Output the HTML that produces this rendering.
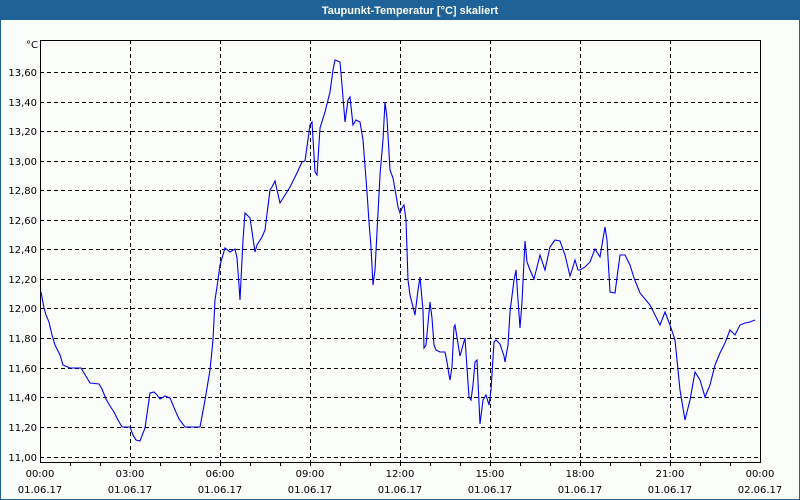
<!DOCTYPE html>
<html><head><meta charset="utf-8"><style>
html,body{margin:0;padding:0;}
body{width:800px;height:500px;overflow:hidden;background:#fbfdfb;font-family:"DejaVu Sans","Liberation Sans",sans-serif;}
</style></head><body>
<svg width="800" height="500" xmlns="http://www.w3.org/2000/svg" style="display:block">
<rect x="0" y="0" width="800" height="500" fill="#fbfdfb"/>
<rect x="0.5" y="0.5" width="799" height="499" fill="none" stroke="#1e6297" stroke-width="1"/>
<rect x="0" y="0" width="800" height="20" fill="#1e6297"/>
<text x="410" y="14" fill="#fff" font-size="11" font-weight="bold" text-anchor="middle" font-family="Liberation Sans, sans-serif">Taupunkt-Temperatur [°C] skaliert</text>
<g stroke="#000" stroke-width="1" stroke-dasharray="4,3" fill="none">
<path d="M40 72.5H760M40 102.5H760M40 131.5H760M40 161.5H760M40 190.5H760M40 220.5H760M40 249.5H760M40 279.5H760M40 308.5H760M40 338.5H760M40 368.5H760M40 397.5H760M40 427.5H760M40 457.5H760"/>
<path d="M130.5 40V462M220.5 40V462M310.5 40V462M400.5 40V462M490.5 40V462M580.5 40V462M670.5 40V462"/>
</g>
<path d="M40.5 40.5H760.5V462.5H40.5Z" fill="none" stroke="#000" stroke-width="1"/>
<path stroke="#000" stroke-width="1" d="M70.5 462v4M100.5 462v4M130.5 462v4M160.5 462v4M190.5 462v4M220.5 462v4M250.5 462v4M280.5 462v4M310.5 462v4M340.5 462v4M370.5 462v4M400.5 462v4M430.5 462v4M460.5 462v4M490.5 462v4M520.5 462v4M550.5 462v4M580.5 462v4M610.5 462v4M640.5 462v4M670.5 462v4M700.5 462v4M730.5 462v4"/>
<g font-size="10" fill="#000" text-anchor="end">
<text x="38" y="48">°C</text>
<text x="37" y="76">13,60</text><text x="37" y="106">13,40</text><text x="37" y="135">13,20</text><text x="37" y="165">13,00</text><text x="37" y="194">12,80</text><text x="37" y="224">12,60</text><text x="37" y="253">12,40</text><text x="37" y="283">12,20</text><text x="37" y="312">12,00</text><text x="37" y="342">11,80</text><text x="37" y="372">11,60</text><text x="37" y="401">11,40</text><text x="37" y="431">11,20</text><text x="37" y="461">11,00</text>
</g>
<g font-size="10" fill="#000" text-anchor="middle">
<text x="40" y="477">00:00</text><text x="130" y="477">03:00</text><text x="220" y="477">06:00</text><text x="310" y="477">09:00</text><text x="400" y="477">12:00</text><text x="490" y="477">15:00</text><text x="580" y="477">18:00</text><text x="670" y="477">21:00</text><text x="760" y="477">00:00</text>
<text x="40" y="493">01.06.17</text><text x="130" y="493">01.06.17</text><text x="220" y="493">01.06.17</text><text x="310" y="493">01.06.17</text><text x="400" y="493">01.06.17</text><text x="490" y="493">01.06.17</text><text x="580" y="493">01.06.17</text><text x="670" y="493">01.06.17</text><text x="760" y="493">02.06.17</text>
</g>
<polyline fill="none" stroke="#0000ee" stroke-width="1.1" points="41,292 44,308 46,315 49,322 52,335 55,345 58,351 60,355 63,365 70,368 81,368 84,373 90,383 99,384 102,389 106,399 110,406 114,412 118,420 122,427 130,427 133,435 136,440 140,441 145,428 150,393 154,392 157,395 160,399 165,396 170,398 175,410 179,419 185,427 200,427 205,400 210,370 213,340 215,300 218,280 220,265 225,248 230,252 235,249 237,258 239,285 240,300 243,240 245,213 250,218 255,252 257,245 262,237 265,230 270,190 272,187 275,181 280,203 285,195 290,187 296,175 302,162 305,161 310,125 312,122 315,172 317,175 320,128 325,112 330,92 333,70 335,60 340,62 342,85 345,122 348,100 350,97 353,125 356,120 360,122 363,140 367,192 369,222 371,247 373,285 375,270 377,232 380,175 383,140 385,102 387,118 390,170 393,178 396,195 398,207 400,213 402,208 404,205 406,220 408,280 410,295 413,307 415,315 418,290 420,277 423,310 424,348 426,345 430,302 432,318 434,345 436,350 440,352 445,352 447,362 449,375 450,380 452,367 454,327 455,325 460,356 463,345 465,338 467,368 469,397 471,400 473,385 475,362 477,360 480,424 483,400 486,395 489,405 491,390 494,342 496,340 500,344 504,356 505,362 508,345 510,312 514,280 516,270 518,300 520,328 522,302 525,241 527,262 530,270 534,279 537,267 540,255 545,270 550,247 555,240 560,241 565,255 570,276 572,270 575,260 578,270 580,270 585,267 590,262 595,249 600,257 605,227 607,240 610,292 615,293 618,270 620,255 625,255 630,265 634,278 640,293 650,305 655,315 660,325 665,312 670,325 675,340 680,390 685,420 690,400 695,372 700,380 705,397 710,385 715,365 720,353 725,343 730,330 735,335 740,325 745,323 750,322 755,320"/>
</svg>
</body></html>
